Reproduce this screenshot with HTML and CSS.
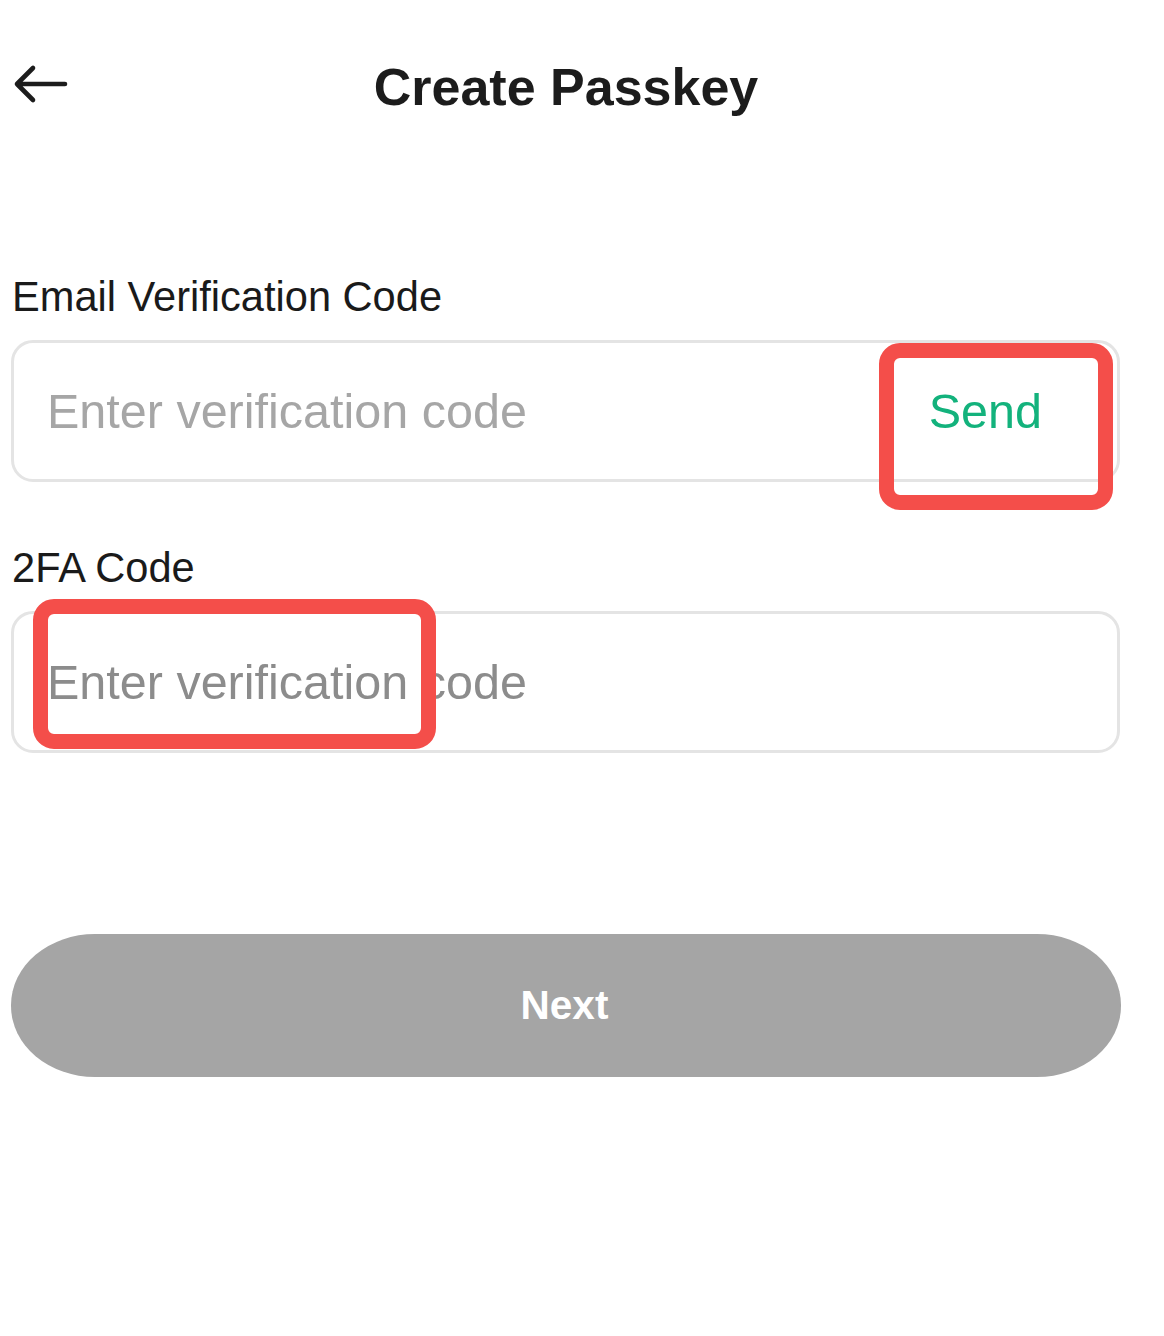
FILE: index.html
```html
<!DOCTYPE html>
<html lang="en">
<head>
<meta charset="utf-8">
<title>Create Passkey</title>
<link rel="stylesheet" href="styles.css">
</head>
<body>
<div class="page">
  <header class="header">
    <svg class="back" width="60" height="60" viewBox="0 0 60 60" aria-label="Back">
      <path d="M54 27H6M22 11L6 27L22 43" fill="none" stroke="#1c1c1c" stroke-width="4.6" stroke-linecap="round" stroke-linejoin="round"/>
    </svg>
    <h1 class="title">Create Passkey</h1>
    <span class="spacer"></span>
  </header>

  <div class="label label-first">Email Verification Code</div>
  <div class="field">
    <span class="placeholder">Enter verification code</span>
    <span class="send">Send</span>
    <span class="mark mark-send"></span>
  </div>

  <div class="label label-second">2FA Code</div>
  <div class="field">
    <span class="placeholder placeholder-dark">Enter verification code</span>
    <span class="mark mark-code"></span>
  </div>

  <div class="next">Next</div>
</div>
</body>
</html>
```

FILE: styles.css
```css
* {
  box-sizing: border-box;
}

html, body {
  margin: 0;
  padding: 0;
  background: #ffffff;
}

body {
  font-family: "Liberation Sans", Arial, sans-serif;
  color: #1c1c1c;
}

.page {
  width: 1110px;
  margin-left: 11px;
  padding-top: 57px;
  display: flex;
  flex-direction: column;
}

.header {
  display: grid;
  grid-template-columns: 1fr auto 1fr;
  align-items: start;
  height: 60px;
}

.back {
  display: block;
}

.title {
  margin: 0;
  font-size: 52px;
  line-height: 60px;
  font-weight: 700;
  color: #1c1c1c;
}

.label {
  font-size: 41.6px;
  line-height: 48px;
  color: #1a1a1a;
  padding-left: 1px;
}

.label-first {
  margin-top: 156px;
}

.label-second {
  margin-top: 62px;
}

.field {
  position: relative;
  margin-top: 19px;
  height: 142px;
  width: 1109px;
  border: 3px solid #e4e4e4;
  border-radius: 22px;
  display: flex;
  align-items: center;
  padding-left: 33px;
  padding-right: 75px;
}

.placeholder {
  flex: 1;
  font-size: 48.5px;
  color: #a6a6a6;
  white-space: nowrap;
}

.placeholder-dark {
  color: #8c8c8c;
}

.send {
  font-size: 48.5px;
  color: #13b27c;
}

.mark {
  position: absolute;
  border: 15px solid #f44e4a;
  border-radius: 21px;
}

.mark-send {
  left: 865px;
  top: 0px;
  width: 234px;
  height: 167px;
}

.mark-code {
  left: 19px;
  top: -15px;
  width: 403px;
  height: 150px;
}

.next {
  margin-top: 181px;
  height: 143px;
  background: #a5a5a5;
  border-radius: 84px / 71px;
  display: flex;
  align-items: center;
  justify-content: center;
  font-size: 40.5px;
  font-weight: 700;
  color: #ffffff;
  padding-right: 3px;
}
```
